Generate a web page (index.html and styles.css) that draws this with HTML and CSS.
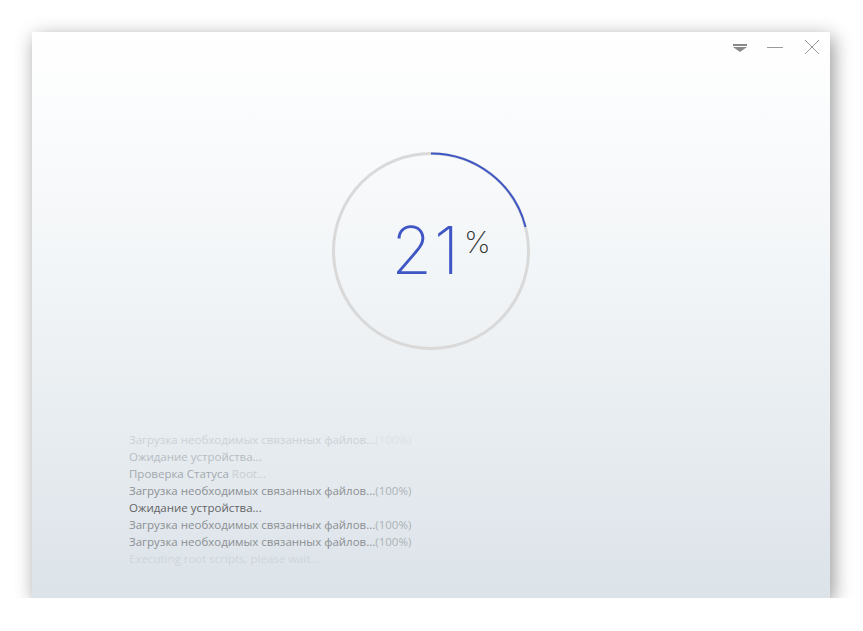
FILE: index.html
```html
<!DOCTYPE html>
<html lang="ru">
  <head>
    <meta charset="UTF-8" />
    <title>Root</title>
    <link rel="stylesheet" href="styles.css">
  </head>
  <body>
    <div class="window">
      <div class="titlebar">
        <svg class="ctl" width="16" height="14" viewBox="0 0 16 14">
          <rect x="1" y="4" width="14" height="2" fill="#8a8a8a" />
          <polygon points="1,7 15,7 8,12" fill="#8a8a8a" />
        </svg>
        <svg class="ctl" width="16" height="14" viewBox="0 0 16 14">
          <line x1="0" y1="7.5" x2="16" y2="7.5" stroke="#9a9a9a" stroke-width="1" />
        </svg>
        <svg class="ctl" width="16" height="14" viewBox="0 0 16 14">
          <path d="M1 0 L15 14 M15 0 L1 14" stroke="#9a9a9a" stroke-width="1" fill="none" />
        </svg>
      </div>

      <div class="progress">
        <svg class="ring" width="200" height="200" viewBox="0 0 200 200">
          <circle cx="100" cy="100" r="97.5" fill="none" stroke="#d9d9d9" stroke-width="3" />
          <circle cx="100" cy="100" r="97.5" fill="none" stroke="#3f56c4" stroke-width="2"
            stroke-dasharray="128.6 1000" transform="rotate(-90 100 100)" />
        </svg>
        <div class="value"><span class="num">21</span><span class="pct">%</span></div>
      </div>

      <ul class="log">
        <li class="l1">Загрузка необходимых связанных файлов...<span class="dim">(100%)</span></li>
        <li class="l2">Ожидание устройства...</li>
        <li class="l3">Проверка Статуса <span class="dim">Root...</span></li>
        <li class="l4">Загрузка необходимых связанных файлов...<span class="dim">(100%)</span></li>
        <li class="l5">Ожидание устройства...</li>
        <li class="l4">Загрузка необходимых связанных файлов...<span class="dim">(100%)</span></li>
        <li class="l4">Загрузка необходимых связанных файлов...<span class="dim">(100%)</span></li>
        <li class="l8">Executing root scripts, please wait...</li>
      </ul>
    </div>
  </body>
</html>
```

FILE: styles.css
```css
body {
  margin: 0;
  background-color: #ffffff;
  font-family: "Open Sans", "Noto Sans", sans-serif;
}
.window {
  margin: 32px 0 0 32px;
  width: 798px;
  height: 566px;
  background: linear-gradient(#ffffff 0%, #f3f6f8 40%, #dce3e9 100%);
  box-shadow: 3px 5px 18px rgba(0, 0, 0, 0.42);
  display: flex;
  flex-direction: column;
}
.titlebar {
  display: flex;
  justify-content: flex-end;
  gap: 21px;
  padding: 8px 10px 0 0;
  height: 22px;
}
.titlebar .ctl:first-child {
  margin-right: -2px;
}
.progress {
  display: grid;
  width: 200px;
  height: 200px;
  margin: 89px auto 0;
}
.ring,
.value {
  grid-area: 1 / 1;
}
.value {
  display: flex;
  justify-content: center;
  align-items: flex-start;
  padding-top: 66px;
  font-family: "Inter", "Roboto", sans-serif;
  font-weight: 200;
}
.num {
  font-size: 66px;
  line-height: 1;
  color: #3f56c4;
  margin-left: 20px;
  letter-spacing: 2px;
}
.pct {
  font-size: 30px;
  line-height: 1;
  color: #333;
  margin-left: 3px;
  margin-top: 10px;
}
.log {
  list-style: none;
  margin: 80px 0 0;
  padding: 0 0 0 97px;
  font-size: 11.5px;
  line-height: 17px;
}
.l1 {
  color: #ccd2d8;
}
.l1 .dim {
  color: #dde2e7;
}
.l2 {
  color: #b6bcc2;
}
.l3 {
  color: #a3a8ad;
}
.l3 .dim {
  color: #c8cdd2;
}
.l4 {
  color: #8c8f92;
}
.l4 .dim {
  color: #aeb2b6;
}
.l5 {
  color: #626466;
}
.l8 {
  color: #cfd5da;
}
```
